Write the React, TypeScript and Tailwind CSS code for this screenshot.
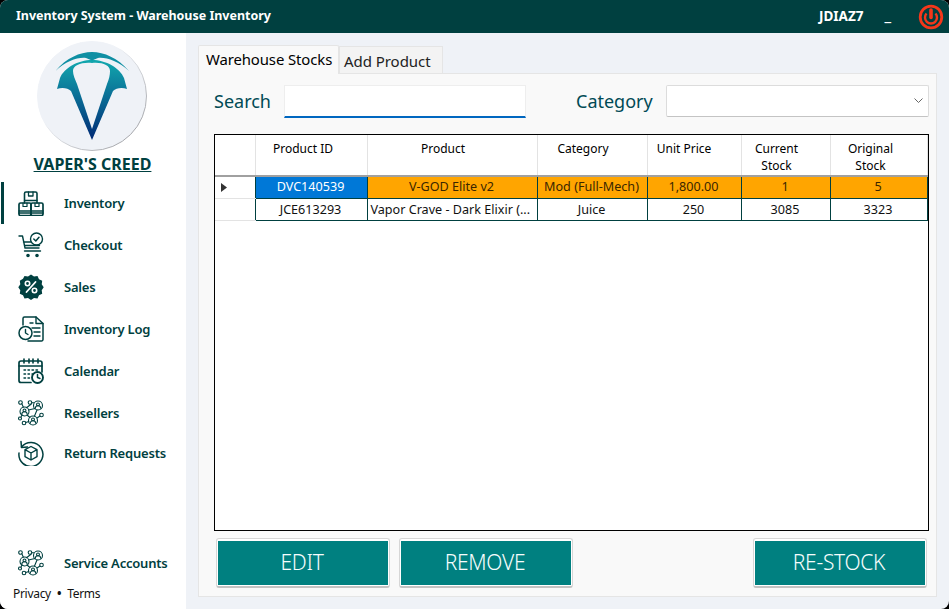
import React from "react";

const C = "#004040";

function Svg({ children }: { children: React.ReactNode }) {
  return (
    <svg width="26" height="26" viewBox="0 0 26 26" fill="none" stroke={C} strokeWidth="1.4" strokeLinecap="round" strokeLinejoin="round">
      {children}
    </svg>
  );
}

const BoxesIcon = () => (
  <Svg>
    <path d="M6.500 13V3.500a1.500 1.500 0 0 1 1.500-1.500h9.500a1.500 1.500 0 0 1 1.500 1.500V13" strokeWidth="1.600" />
    <path d="M10.500 2v4h4.500V2M6.500 10.500h12.500" strokeWidth="1.300" />
    <rect x="1" y="13" width="12" height="12.500" rx="1.500" strokeWidth="1.700" />
    <rect x="13" y="13" width="12" height="12.500" rx="1.500" strokeWidth="1.700" />
    <path d="M1 21h12M13 21h12M1 23h12M13 23h12" strokeWidth="1.500" />
    <path d="M5 13v3.500h4V13M17 13v3.500h4V13" strokeWidth="1.200" />
  </Svg>
);
const CartIcon = () => (
  <Svg>
    <path d="M1 4h3.500l2.500 12h14M5.500 10h7M6.500 13.500h15M6.500 19h16" strokeWidth="1.400" />
    <circle cx="18.500" cy="7" r="6" strokeWidth="1.400" />
    <path d="m15.800 7 2 2 3.200-3.800" strokeWidth="1.500" />
    <circle cx="10" cy="23.500" r="1.100" fill={C} />
    <circle cx="19" cy="23.500" r="1.100" fill={C} />
  </Svg>
);
const SalesIcon = () => (
  <svg width="26" height="26" viewBox="0 0 26 26">
    <path
      fill={C}
      d="M13 .5l3 2 3.500-.5 1.500 3.200 3.200 1.500-.5 3.500 2 3-2 3 .5 3.500-3.200 1.500-1.500 3.200-3.500-.5-3 2-3-2-3.500.5L5 21.200l-3.200-1.500.5-3.500-2-3 2-3-.5-3.500L5 4.700 6.500 2 10 2.500z"
    />
    <circle cx="9.500" cy="9.500" r="2.200" fill="none" stroke="#fff" strokeWidth="1.600" />
    <circle cx="16.500" cy="16.500" r="2.200" fill="none" stroke="#fff" strokeWidth="1.600" />
    <path d="M17.500 8 8.500 18" stroke="#fff" strokeWidth="1.800" strokeLinecap="round" />
  </svg>
);
const LogIcon = () => (
  <Svg>
    <path d="M5 9V2.500a1.500 1.500 0 0 1 1.500-1.500H18l7 6.500v16a1.500 1.500 0 0 1-1.500 1.500H10" strokeWidth="1.500" />
    <path d="M18 1v6.500h7M12 7h3M14 12h8M16 16h6M16 20h6" />
    <circle cx="7.500" cy="17" r="6.500" strokeWidth="1.500" />
    <path d="M7.500 13.500V17l2.500 1.500" />
  </Svg>
);
const CalendarIcon = () => (
  <Svg>
    <path d="M13 24.500H3a2 2 0 0 1-2-2V5a2 2 0 0 1 2-2h19a2 2 0 0 1 2 2v9" strokeWidth="1.700" />
    <path d="M1 8h23M6 1v4M11 1v4M15 1v4M20 1v4" strokeWidth="1.600" />
    <path d="M6 12h1.500M10 12h1.500M14 12h1.500M18 12h1.500M6 16h1.500M10 16h1.500M14 16h1.500M6 20h1.500M10 20h1.500" strokeWidth="1.400" />
    <circle cx="19.500" cy="19.500" r="5.500" strokeWidth="1.900" />
    <path d="M19.500 16.500v3l2.500 1" strokeWidth="1.500" />
  </Svg>
);
const Person = ({ x, y, r }: { x: number; y: number; r: number }) => (
  <g strokeWidth="1.100">
    <circle cx={x} cy={y} r={r} />
    <circle cx={x} cy={y - r * 0.25} r={r * 0.32} />
    <path d={`M${x - r * 0.6} ${y + r * 0.6}a${r * 0.6} ${r * 0.55} 0 0 1 ${r * 1.2} 0`} />
  </g>
);
const NetworkIcon = () => (
  <Svg>
    <Person x={20} y={5.500} r={4.500} />
    <Person x={6.500} y={11.500} r={4.500} />
    <Person x={15} y={20.500} r={4.500} />
    <g strokeWidth="1.100">
      <circle cx="2.500" cy="2.500" r="1.800" />
      <circle cx="12" cy="2.500" r="1.800" />
      <circle cx="23.500" cy="15" r="1.800" />
      <circle cx="6" cy="23" r="1.800" />
      <circle cx="2" cy="18.500" r="1.500" />
      <path d="M3.800 3.800l1.500 3.300M13.800 2.800h2M17 8.500l-6.500 1.500M9 15l3 2.500M19 18l3-2M10.800 21.500l-3 1M3 17l1-2M13 4.200l-4.500 3.500M19 10l-2.500 6" />
    </g>
  </Svg>
);
const ReturnIcon = () => (
  <Svg>
    <path d="M3.500 7A12 12 0 1 1 1 13" strokeWidth="1.500" />
    <path d="M3 1.500 3.500 7.500l6-.5" strokeWidth="1.500" />
    <path d="m13 6.500 6 3.200v7l-6 3.300-6-3.300v-7zM7 9.700l6 3.300 6-3.300M13 13v7" strokeWidth="1.400" />
  </Svg>
);

const PowerIcon = () => (
  <svg width="26" height="26" viewBox="0 0 26 26" fill="none" stroke="#f5371a">
    <circle cx="13" cy="13" r="10.800" strokeWidth="2.800" />
    <path d="M8.500 9.500a6 6 0 1 0 9 0" strokeWidth="2.400" />
    <path d="M13 6v7.500" strokeWidth="3.600" strokeLinecap="round" />
  </svg>
);

const Logo = () => (
  <svg width="110" height="110" viewBox="37 41 110 110">
    <defs>
      <linearGradient id="lg" x1="0" y1="0" x2="0" y2="1">
        <stop offset="0" stopColor="#12a8ae" />
        <stop offset="0.45" stopColor="#0a6f96" />
        <stop offset="1" stopColor="#012a75" />
      </linearGradient>
      <linearGradient id="ring" x1="0" y1="0" x2="1" y2="1">
        <stop offset="0.4" stopColor="#eff2f7" />
        <stop offset="1" stopColor="#8f9094" />
      </linearGradient>
    </defs>
    <circle cx="92" cy="96" r="54.500" fill="#eff2f7" stroke="url(#ring)" strokeWidth="1" />
    <path
      fill="url(#lg)"
      fillRule="evenodd"
      d="M92 60C78 60 64 68 60 78L57 89C62 87 68 88 71 91L92 140 113 91C116 88 122 87 127 89L124 78C120 68 106 60 92 60ZM92 63C82 62 73 65 73 71 73 75 75 79 77 84L92 129 107 84C109 79 110 75 110 71 110 65 102 62 92 63Z"
    />
    <path
      fill="#0f8fa3"
      d="M55.500 71C66 58 80 52 92 52 104 52 118 58 129 71 118 61 106 57 98 58L92 60.500 86 58C78 57 66 61 55.500 71Z"
    />
  </svg>
);

const nav: [string, React.FC, string][] = [
  ["Inventory", BoxesIcon, "h-[42px]"],
  ["Checkout", CartIcon, "h-[42px]"],
  ["Sales", SalesIcon, "h-[42px]"],
  ["Inventory Log", LogIcon, "h-[42px]"],
  ["Calendar", CalendarIcon, "h-[42px]"],
  ["Resellers", NetworkIcon, "h-[42px]"],
  ["Return Requests", ReturnIcon, "h-[38px]"],
];

const NavItem = ({ label, Icon, h, active }: { label: string; Icon: React.FC; h: string; active?: boolean }) => (
  <div className={`relative flex items-center pl-[18px] ${h}`}>
    {active && <div className="absolute left-[1px] top-0 bottom-0 w-[3px] bg-[#004040]" />}
    <div className="w-[46px] flex items-center"><Icon /></div>
    <span className="text-[13px] font-semibold text-[#004040] leading-none tracking-[-0.2px]">{label}</span>
  </div>
);

const cols = ["w-[40px]", "w-[112px]", "w-[170px]", "w-[110px]", "w-[94px]", "w-[89px]", "w-[97px]"];

const Head = ({ children, i }: { children?: React.ReactNode; i: number }) => (
  <th className={`${cols[i]} border-r border-[#e3e3e3] border-b-[2px] border-b-[#a0a0a0] align-top font-normal text-center text-[12px] leading-[17px] pt-[5px] text-black h-[41px]`}>
    {children}
  </th>
);

const Cell = ({ children, cls }: { children?: React.ReactNode; cls?: string }) => (
  <td className={`h-[22px] border-r border-b border-[#004040] text-center text-[12.6px] leading-none pl-[3px] pr-[4px] pt-[1px] whitespace-nowrap overflow-hidden ${cls ?? ""}`}>
    {children}
  </td>
);

const Btn = ({ children }: { children: string }) => (
  <button className="w-[174px] h-[50px] rounded-[3px] border border-[#d6d6d6] border-b-[2px] border-b-[#c2c2c2] bg-white px-[1px] pt-[2px] pb-[1px]">
    <span className="flex h-full w-full items-center justify-center bg-[#008080] text-[#f6fdfd] text-[21px] font-light tracking-[-0.3px] pr-[2px]">
      {children}
    </span>
  </button>
);

export default function App() {
  return (
    <div className="h-[609px] w-[949px] bg-black overflow-hidden" style={{ fontFamily: '"Noto Sans", sans-serif' }}>
      <div className="h-full w-full flex flex-col rounded-[8px] overflow-hidden bg-[#eff2f7]">
        <header className="h-[33px] shrink-0 bg-[#004040] flex items-center text-white font-bold text-[12.5px] pl-[16px]">
          <span className="tracking-[-0.02px]">Inventory System - Warehouse Inventory</span>
          <span className="ml-auto text-[13.5px] font-bold">JDIAZ7</span>
          <span className="ml-[21px] mb-[4px] text-[16px] font-bold leading-none">_</span>
          <span className="ml-[27px] mr-[5px]"><PowerIcon /></span>
        </header>
        <div className="flex flex-1 min-h-0">
          <aside className="w-[186px] shrink-0 bg-white flex flex-col">
            <div className="pt-[8px] pl-[37px]"><Logo /></div>
            <div className="text-center text-[16px] font-bold underline text-[#004040] mt-[2px] leading-[22px] h-[21px] pr-[1px]">VAPER'S CREED</div>
            <nav className="mt-[8px]">
              {nav.map(([l, I, h], i) => (
                <NavItem key={l} label={l} Icon={I} h={h} active={i === 0} />
              ))}
            </nav>
            <div className="mt-auto">
              <NavItem label="Service Accounts" Icon={NetworkIcon} h="h-[38px]" />
              <div className="h-[27px] pl-[13px] pt-[3px] text-[12px] text-[#111] leading-[18px] flex gap-[6px] tracking-[-0.3px]">
                <span>Privacy</span><span className="font-bold">•</span><span>Terms</span>
              </div>
            </div>
          </aside>
          <main className="flex-1 min-w-0 pl-[12px] pr-[12px] pt-[12px] pb-[12px] flex flex-col">
            <div className="flex items-end h-[29px] relative z-10">
              <div className="w-[141px] h-[29px] bg-[#f9f9f9] border border-[#e5e5e5] border-b-0 rounded-t-[2px] text-[14.9px] text-black pl-[7px] leading-[27px] tracking-[-0.1px]">Warehouse Stocks</div>
              <div className="w-[104px] h-[27px] mb-[1px] bg-[#f3f3f3] border border-[#e5e5e5] border-b-0 text-[15px] text-[#222] pl-[4px] leading-[28px] tracking-[-0.05px]">Add Product</div>
            </div>
            <section className="flex-1 min-h-0 -mt-[1px] bg-[#f9f9f9] border border-[#e5e5e5] pl-[15px] pr-[7px] pt-[11px] pb-[9px] flex flex-col">
              <div className="flex items-start h-[33px]">
                <span className="text-[18px] text-[#004a55] w-[70px] leading-[33px]">Search</span>
                <div className="w-[242px] h-[33px] bg-white border border-[#eeeeee] border-b-[2px] border-b-[#0067c0]" />
                <span className="ml-[50px] text-[18px] text-[#004a55] w-[90px] leading-[33px]">Category</span>
                <div className="w-[263px] h-[32px] bg-white border border-[#dcdcdc] border-b-[#c4c4c4] rounded-[2px] flex items-center justify-end pr-[5px]">
                  <svg width="9" height="6" viewBox="0 0 9 6" fill="none" stroke="#666" strokeWidth="1"><path d="m.5.5 4 4 4-4" /></svg>
                </div>
              </div>
              <div className="mt-[16px] h-[397px] w-[715px] shrink-0 border border-black bg-white overflow-hidden">
                <table className="table-fixed border-collapse w-[712px]">
                  <thead>
                    <tr>
                      <Head i={0} />
                      <Head i={1}><span className="relative right-[8px]">Product ID</span></Head>
                      <Head i={2}><span className="relative right-[9px]">Product</span></Head>
                      <Head i={3}><span className="relative right-[9px]">Category</span></Head>
                      <Head i={4}><span className="relative right-[10px]">Unit Price</span></Head>
                      <Head i={5}><span className="relative right-[9px]">Current<br />Stock</span></Head>
                      <Head i={6}><span className="relative right-[8px]">Original<br />Stock</span></Head>
                    </tr>
                  </thead>
                  <tbody>
                    <tr className="text-[#3a2600]">
                      <td className="h-[22px] border-r border-[#004040] border-b border-b-[#e3e3e3] pl-[6px]">
                        <svg width="6" height="9" viewBox="0 0 6 9" className="block"><path d="M0 0l6 4.500L0 9z" fill="#333" /></svg>
                      </td>
                      <Cell cls="bg-[#0078d7] text-white">DVC140539</Cell>
                      <Cell cls="bg-[#ffa500]">V-GOD Elite v2</Cell>
                      <Cell cls="bg-[#ffa500]">Mod (Full-Mech)</Cell>
                      <Cell cls="bg-[#ffa500]">1,800.00</Cell>
                      <Cell cls="bg-[#ffa500]">1</Cell>
                      <Cell cls="bg-[#ffa500]">5</Cell>
                    </tr>
                    <tr className="text-[#111]">
                      <td className="h-[22px] border-r border-[#004040] border-b border-b-[#e3e3e3]" />
                      <Cell cls="pt-[3px]">JCE613293</Cell>
                      <Cell cls="text-left pt-[3px]">Vapor Crave - Dark Elixir (...</Cell>
                      <Cell cls="pt-[3px]">Juice</Cell>
                      <Cell cls="pt-[3px]">250</Cell>
                      <Cell cls="pt-[3px]">3085</Cell>
                      <Cell cls="pt-[3px]">3323</Cell>
                    </tr>
                  </tbody>
                </table>
              </div>
              <div className="mt-[7px] flex pl-[2px] pr-[2px] gap-[9px]">
                <Btn>EDIT</Btn>
                <Btn>REMOVE</Btn>
                <div className="ml-auto"><Btn>RE-STOCK</Btn></div>
              </div>
            </section>
          </main>
        </div>
      </div>
    </div>
  );
}
